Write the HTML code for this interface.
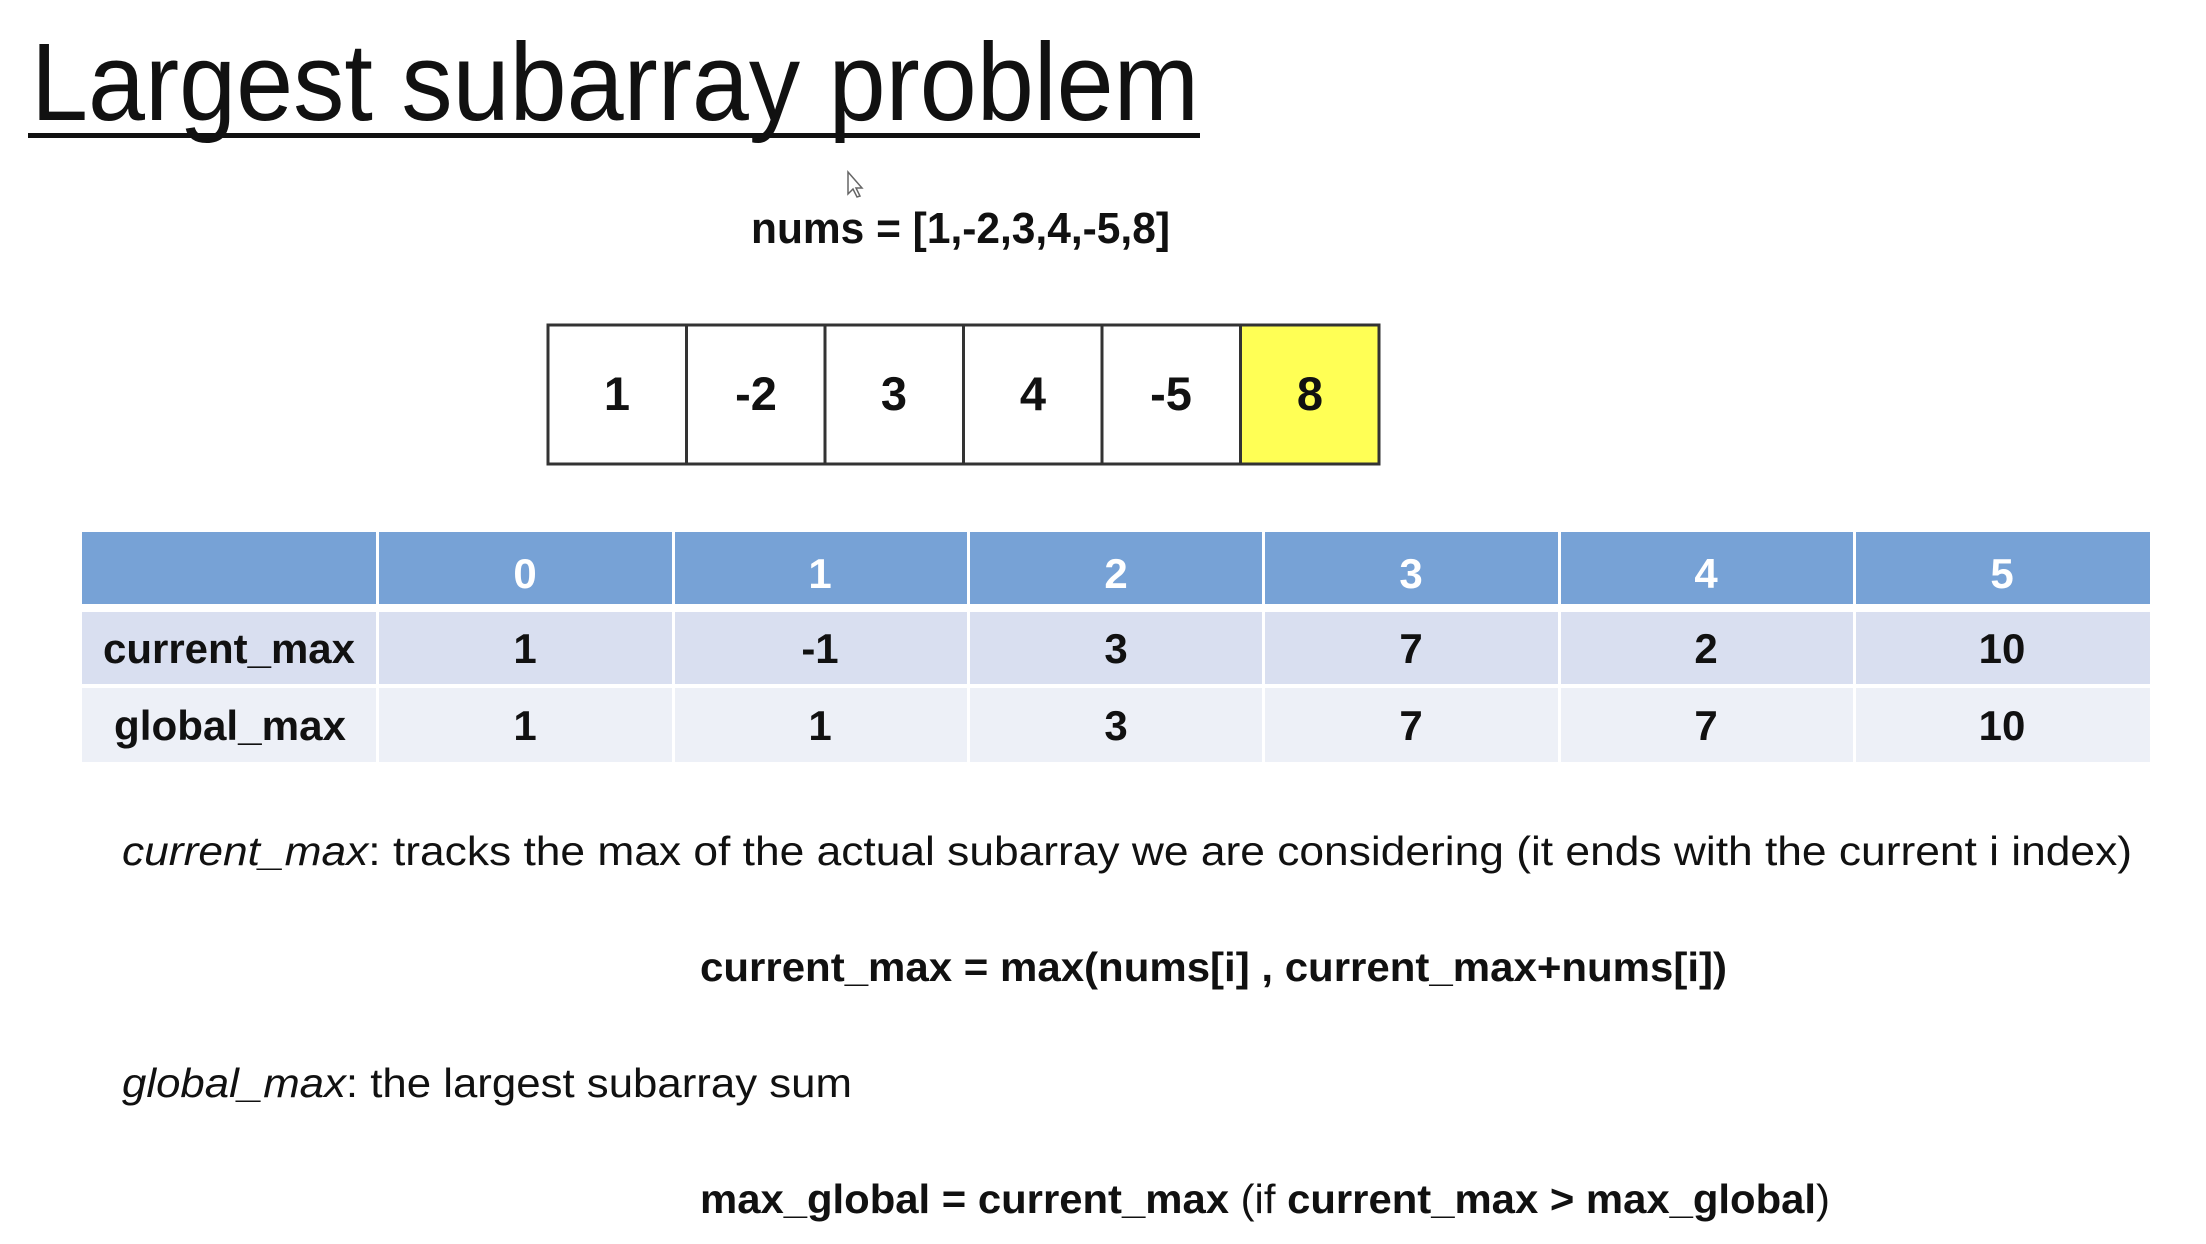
<!DOCTYPE html>
<html><head><meta charset="utf-8"><style>
html,body{margin:0;padding:0;background:#fff;width:2206px;height:1244px;overflow:hidden}
svg{display:block}
text{font-family:"Liberation Sans",sans-serif;fill:#111}
.b{font-weight:bold}
</style></head><body>
<svg width="2206" height="1244" viewBox="0 0 2206 1244" xmlns="http://www.w3.org/2000/svg">
<rect width="2206" height="1244" fill="#fff"/>
<text x="31" y="120" font-size="110" textLength="1168" lengthAdjust="spacingAndGlyphs">Largest subarray problem</text>
<rect x="28" y="133" width="1172" height="5" fill="#111"/>
<path d="M848 172 L848 194 L853 189 L857 197 L860 196 L856 188 L862 188 Z" fill="#fff" stroke="#666" stroke-width="1.5"/>
<text class="b" x="751" y="243" font-size="44" textLength="419" lengthAdjust="spacingAndGlyphs">nums = [1,-2,3,4,-5,8]</text>
<g stroke="#333" stroke-width="3" fill="#fff">
<rect x="1240.5" y="325" width="138.5" height="139" fill="#ffff55"/>
<rect x="548" y="325" width="831" height="139" fill="none"/>
<line x1="686.5" y1="325" x2="686.5" y2="464"/><line x1="825" y1="325" x2="825" y2="464"/>
<line x1="963.5" y1="325" x2="963.5" y2="464"/><line x1="1102" y1="325" x2="1102" y2="464"/>
<line x1="1240.5" y1="325" x2="1240.5" y2="464"/>
</g>
<g class="b" font-size="47" text-anchor="middle">
<text class="b" x="617" y="410">1</text><text class="b" x="756" y="410">-2</text>
<text class="b" x="894" y="410">3</text><text class="b" x="1033" y="410">4</text>
<text class="b" x="1171" y="410">-5</text><text class="b" x="1310" y="410">8</text>
</g>
<rect x="82" y="532" width="2068" height="72" fill="#77a2d6"/>
<rect x="82" y="612" width="2068" height="72" fill="#d9dff0"/>
<rect x="82" y="688" width="2068" height="74" fill="#edf0f7"/>
<g fill="#fff">
<rect x="376" y="532" width="3" height="230"/><rect x="672" y="532" width="3" height="230"/>
<rect x="967" y="532" width="3" height="230"/><rect x="1262" y="532" width="3" height="230"/>
<rect x="1558" y="532" width="3" height="230"/><rect x="1853" y="532" width="3" height="230"/>
</g>
<g font-size="42" text-anchor="middle">
<text class="b" x="525" y="588" style="fill:#fff">0</text><text class="b" x="820" y="588" style="fill:#fff">1</text>
<text class="b" x="1116" y="588" style="fill:#fff">2</text><text class="b" x="1411" y="588" style="fill:#fff">3</text>
<text class="b" x="1706" y="588" style="fill:#fff">4</text><text class="b" x="2002" y="588" style="fill:#fff">5</text>
<text class="b" x="525" y="663">1</text><text class="b" x="820" y="663">-1</text>
<text class="b" x="1116" y="663">3</text><text class="b" x="1411" y="663">7</text>
<text class="b" x="1706" y="663">2</text><text class="b" x="2002" y="663">10</text>
<text class="b" x="525" y="740">1</text><text class="b" x="820" y="740">1</text>
<text class="b" x="1116" y="740">3</text><text class="b" x="1411" y="740">7</text>
<text class="b" x="1706" y="740">7</text><text class="b" x="2002" y="740">10</text>
</g>
<text class="b" x="103" y="663" font-size="42" textLength="252" lengthAdjust="spacingAndGlyphs">current_max</text>
<text class="b" x="114" y="740" font-size="42" textLength="232" lengthAdjust="spacingAndGlyphs">global_max</text>
<text x="122" y="865" font-size="41" textLength="2010" lengthAdjust="spacingAndGlyphs"><tspan font-style="italic">current_max</tspan>: tracks the max of the actual subarray we are considering (it ends with the current i index)</text>
<text class="b" x="700" y="981" font-size="41" textLength="1027" lengthAdjust="spacingAndGlyphs">current_max = max(nums[i] , current_max+nums[i])</text>
<text x="122" y="1097" font-size="41" textLength="730" lengthAdjust="spacingAndGlyphs"><tspan font-style="italic">global_max</tspan>: the largest subarray sum</text>
<text x="700" y="1213" font-size="41" textLength="1130" lengthAdjust="spacingAndGlyphs"><tspan font-weight="bold">max_global = current_max</tspan> (if <tspan font-weight="bold">current_max &gt; max_global</tspan>)</text>
</svg>
</body></html>
